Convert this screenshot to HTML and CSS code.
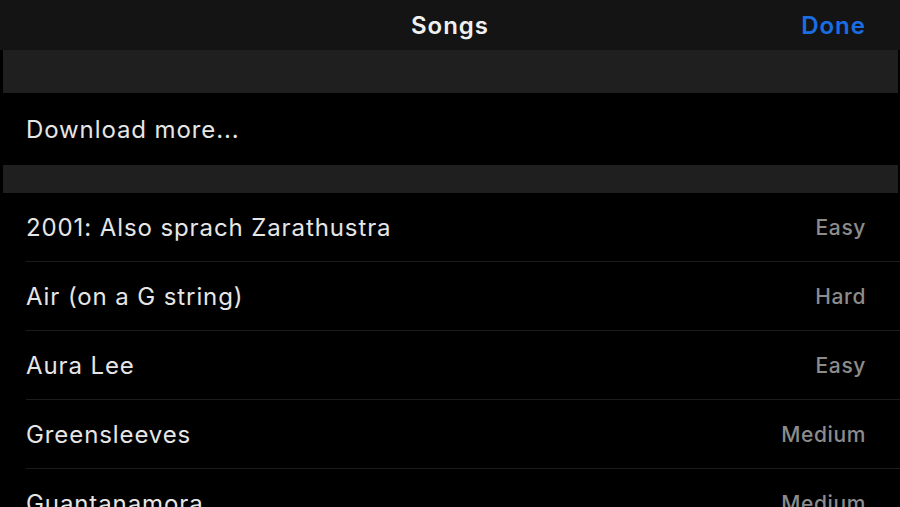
FILE: index.html
```html
<!DOCTYPE html>
<html>
<head>
<meta charset="utf-8">
<link rel="stylesheet" href="styles.css">
</head>
<body>
<div class="screen">
  <header class="navbar">
    <div class="nav-side"></div>
    <div class="nav-title">Songs</div>
    <div class="nav-side nav-right"><span class="done">Done</span></div>
  </header>
  <div class="band band-top"></div>
  <div class="row download"><span class="label">Download more...</span></div>
  <div class="band band-mid"></div>
  <ul class="list">
    <li class="row song"><span class="label">2001: Also sprach Zarathustra</span><span class="level">Easy</span></li>
    <li class="row song"><span class="label">Air (on a G string)</span><span class="level">Hard</span></li>
    <li class="row song"><span class="label">Aura Lee</span><span class="level">Easy</span></li>
    <li class="row song"><span class="label">Greensleeves</span><span class="level">Medium</span></li>
    <li class="row song"><span class="label">Guantanamora</span><span class="level">Medium</span></li>
  </ul>
</div>
</body>
</html>
```
FILE: styles.css
```css
html, body {
  margin: 0;
  padding: 0;
  background: #000;
  height: 100%;
  overflow: hidden;
}
.screen {
  font-family: Inter, "Noto Sans", sans-serif;
  color: #e6e6e6;
  -webkit-font-smoothing: antialiased;
}
.navbar {
  height: 50px;
  background: #141414;
  display: grid;
  grid-template-columns: 1fr auto 1fr;
  align-items: center;
}
.nav-title {
  font-size: 24px;
  font-weight: 600;
  color: #f0f0f0;
  letter-spacing: 1px;
}
.nav-right {
  display: flex;
  justify-content: flex-end;
  padding-right: 34px;
}
.done {
  color: #1a6ee4;
  font-size: 24px;
  font-weight: 600;
  letter-spacing: 1px;
}
.band {
  background: #1f1f1f;
  margin: 0 2px 0 3px;
}
.band-top { height: 43px; }
.band-mid { height: 28px; }
.row {
  display: flex;
  align-items: center;
  justify-content: space-between;
  padding-left: 26px;
}
.download {
  height: 72px;
}
.label {
  font-size: 24px;
  font-weight: 400;
  color: #e6e6e6;
  letter-spacing: 0.9px;
}
.list {
  list-style: none;
  margin: 0;
  padding: 0;
}
.song {
  height: 69px;
  box-sizing: border-box;
  padding-right: 34px;
  position: relative;
}
.song::after {
  content: "";
  position: absolute;
  left: 26px;
  right: 0;
  bottom: 0;
  height: 1px;
  background: #1c1c1c;
}
.level {
  font-size: 21px;
  font-weight: 500;
  color: #8c8c8c;
  letter-spacing: 0.6px;
}
```
